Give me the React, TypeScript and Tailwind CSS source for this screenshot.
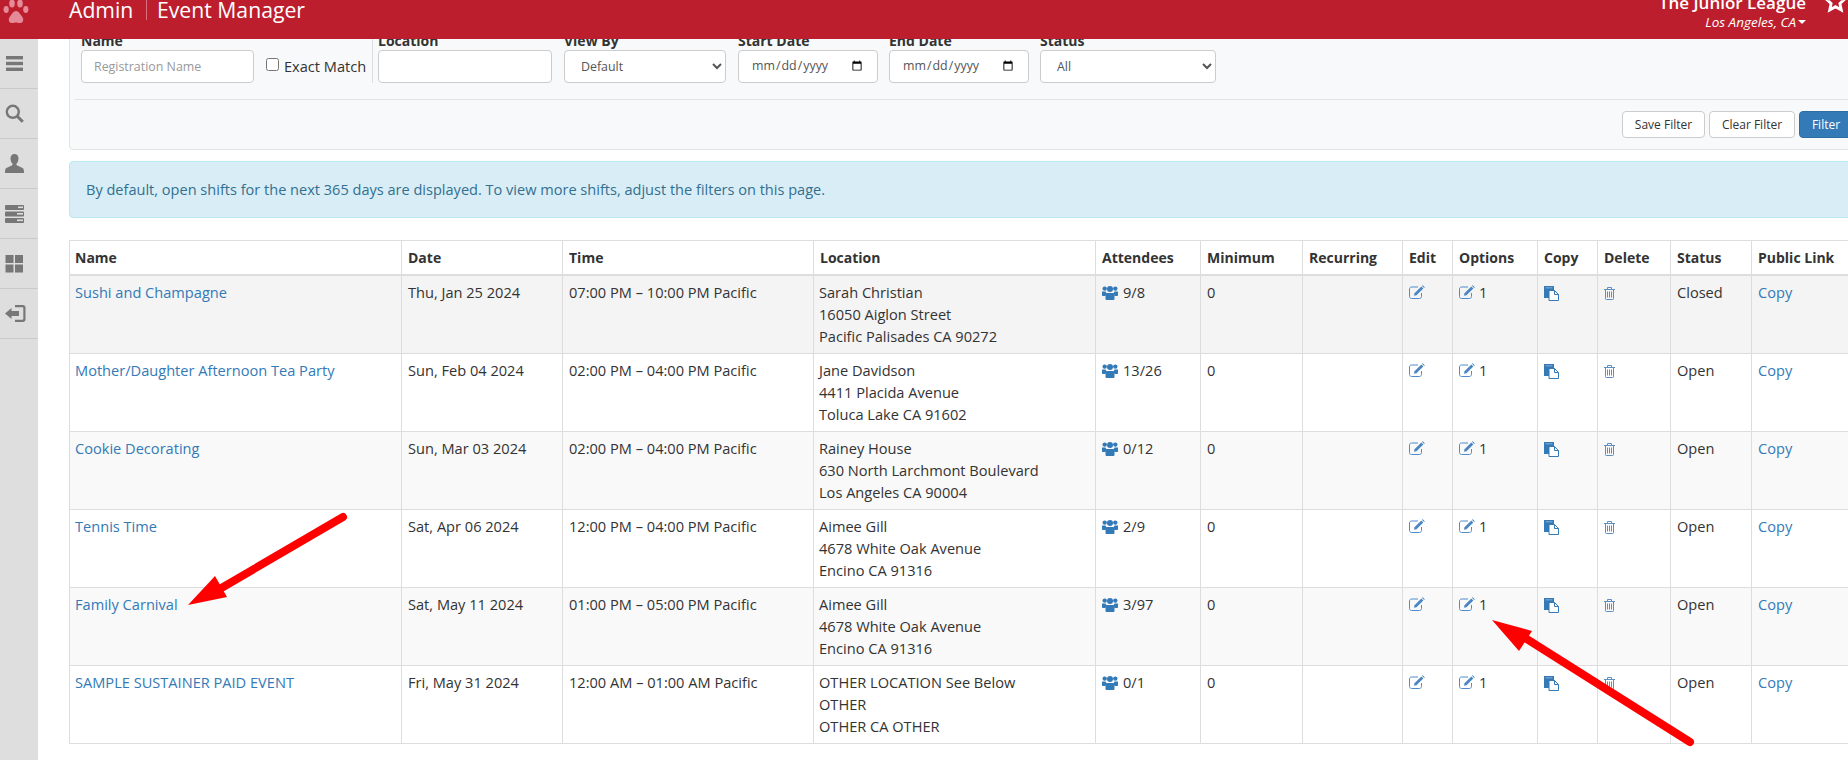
const events = [
    { name: 'Sushi and Champagne', date: 'Thu, Jan 25 2024', time: '07:00 PM – 10:00 PM Pacific', loc: ['Sarah Christian', '16050 Aiglon Street', 'Pacific Palisades CA 90272'], att: '9/8', status: 'Closed', bg: 'bg-[#f4f4f4]' },
    { name: 'Mother/Daughter Afternoon Tea Party', date: 'Sun, Feb 04 2024', time: '02:00 PM – 04:00 PM Pacific', loc: ['Jane Davidson', '4411 Placida Avenue', 'Toluca Lake CA 91602'], att: '13/26', status: 'Open', bg: 'bg-white' },
    { name: 'Cookie Decorating', date: 'Sun, Mar 03 2024', time: '02:00 PM – 04:00 PM Pacific', loc: ['Rainey House', '630 North Larchmont Boulevard', 'Los Angeles CA 90004'], att: '0/12', status: 'Open', bg: 'bg-[#f9f9f9]' },
    { name: 'Tennis Time', date: 'Sat, Apr 06 2024', time: '12:00 PM – 04:00 PM Pacific', loc: ['Aimee Gill', '4678 White Oak Avenue', 'Encino CA 91316'], att: '2/9', status: 'Open', bg: 'bg-white' },
    { name: 'Family Carnival', date: 'Sat, May 11 2024', time: '01:00 PM – 05:00 PM Pacific', loc: ['Aimee Gill', '4678 White Oak Avenue', 'Encino CA 91316'], att: '3/97', status: 'Open', bg: 'bg-[#f9f9f9]' },
    { name: 'SAMPLE SUSTAINER PAID EVENT', date: 'Fri, May 31 2024', time: '12:00 AM – 01:00 AM Pacific', loc: ['OTHER LOCATION See Below', 'OTHER', 'OTHER CA OTHER'], att: '0/1', status: 'Open', bg: 'bg-white' },
];

const columns = [
    { label: 'Name', width: 'w-[332px]' },
    { label: 'Date', width: 'w-[161px]' },
    { label: 'Time', width: 'w-[251px]' },
    { label: 'Location', width: 'w-[282px]' },
    { label: 'Attendees', width: 'w-[105px]' },
    { label: 'Minimum', width: 'w-[102px]' },
    { label: 'Recurring', width: 'w-[100px]' },
    { label: 'Edit', width: 'w-[50px]' },
    { label: 'Options', width: 'w-[85px]' },
    { label: 'Copy', width: 'w-[60px]' },
    { label: 'Delete', width: 'w-[73px]' },
    { label: 'Status', width: 'w-[81px]' },
    { label: 'Public Link', width: 'w-[110px]' },
];

function UsersIcon() {
    return (
        <svg width="16" height="15" viewBox="0 0 16 15" fill="#337ab7" className="mr-[5px] inline-block align-[-2px]">
            <circle cx="8" cy="4" r="3" />
            <circle cx="2.700" cy="3.600" r="2.200" />
            <circle cx="13.300" cy="3.600" r="2.200" />
            <path d="M0 6.500h3.500c.3 1 .9 1.800 1.500 2.300-.9.500-1.400 1.300-1.500 2.200H.8C.3 11 0 10.700 0 10.200z" />
            <path d="M16 6.500h-3.500c-.3 1-.9 1.800-1.500 2.300.9.500 1.400 1.300 1.500 2.200h2.700c.5 0 .8-.3.800-.8z" />
            <path d="M5.300 8h5.400c1.300 0 1.800 1 1.800 2.500v3.200c0 .8-.5 1.300-1.300 1.300H4.800c-.8 0-1.300-.5-1.300-1.300v-3.200C3.500 9 4 8 5.300 8z" />
        </svg>
    );
}

function EditIcon({ className }: { className?: string }) {
    return (
        <svg width="16" height="14" viewBox="0 0 16 14" className={`inline-block align-[-1px] ${className ?? ''}`}>
            <path d="M12.500 8v3.500c0 1.100-.9 2-2 2H2.500c-1.100 0-2-.9-2-2V4c0-1.100.9-2 2-2H9" fill="none" stroke="#4f8cc9" />
            <path d="M5.500 8.200L12.300 1.400l2 2L7.500 10.200 5 10.700z" fill="#4a86c4" />
            <path d="M13 .7l.7-.5 2 2-.5.700z" fill="#337ab7" />
        </svg>
    );
}

function CopyIcon() {
    return (
        <svg width="15" height="15" viewBox="0 0 15 15" className="inline-block align-[-3px]">
            <path d="M0 0h10v12H0z" fill="#337ab7" />
            <path d="M1.500 1.200h7v1.200h-7z" fill="#7aa5cc" />
            <path d="M5 4.500h5.500l4 4v6H5z" fill="#fff" stroke="#337ab7" />
            <path d="M10.500 4.500v4h4" fill="none" stroke="#337ab7" />
        </svg>
    );
}

function TrashIcon() {
    return (
        <svg width="11" height="13" viewBox="0 0 11 13" fill="none" stroke="#5b8fc0" className="inline-block align-[-2px]">
            <path d="M0 2.500h11M3.500 2.500V.5h4v2M1.500 2.500v9.200c0 .5.300.8.800.8h6.400c.5 0 .8-.3.800-.8V2.500" />
            <path d="M3.500 4.500v6M5.500 4.500v6M7.500 4.500v6" />
        </svg>
    );
}

const sidebarIcons = [
    <svg key="menu" width="19" height="19" viewBox="0 0 19 19" fill="#777">
        <rect x="1" y="2" width="17" height="3.400" />
        <rect x="1" y="7.800" width="17" height="3.400" />
        <rect x="1" y="13.600" width="17" height="3.400" />
    </svg>,
    <svg key="search" width="19" height="19" viewBox="0 0 19 19" fill="none" stroke="#777">
        <circle cx="7.800" cy="7.800" r="6" strokeWidth="2.400" />
        <path d="M12.200 12.200l5.600 5.600" strokeWidth="3" />
    </svg>,
    <svg key="user" width="19" height="19" viewBox="0 0 19 19" fill="#777">
        <path d="M9.500 0c2.600 0 4 2 4 4.400 0 2.200-.9 4-1.900 5.200-.5.700-.2 1.400.6 1.800l5.400 2.700c1 .5 1.400 1.600 1.400 4.900H0c0-3.300.4-4.400 1.400-4.900l5.400-2.700c.8-.4 1.100-1.100.6-1.800C6.400 8.400 5.500 6.600 5.500 4.400 5.500 2 6.900 0 9.500 0z" />
    </svg>,
    <svg key="tasks" width="19" height="19" viewBox="0 0 19 19" fill="#777">
        <rect x="0" y="1" width="19" height="5" rx="1" />
        <rect x="0" y="7.500" width="19" height="5" rx="1" />
        <rect x="0" y="14" width="19" height="5" rx="1" />
        <rect x="13" y="2.500" width="5" height="1.600" fill="#dedede" />
        <rect x="12" y="9" width="6" height="1.600" fill="#dedede" />
        <rect x="12" y="15.500" width="6" height="1.600" fill="#dedede" />
    </svg>,
    <svg key="grid" width="19" height="19" viewBox="0 0 19 19" fill="#777">
        <rect x="0.500" y="1" width="8" height="8" />
        <rect x="10" y="1" width="8" height="8" />
        <rect x="0.500" y="10.500" width="8" height="8" />
        <rect x="10" y="10.500" width="8" height="8" />
    </svg>,
    <svg key="logout" width="21" height="19" viewBox="0 0 21 19" fill="#777">
        <path d="M0 9.500L6.500 4v3h7.500v5H6.500v3z" />
        <path d="M10 1h8c1.400 0 2.500 1.100 2.500 2.500v12c0 1.400-1.100 2.500-2.500 2.500h-8v-2.200h7.500c.5 0 .8-.3.800-.8V4c0-.5-.3-.8-.8-.8H10z" />
    </svg>,
];

export default function App() {
    return (
        <div className="relative h-[760px] w-[1848px] overflow-hidden bg-white font-['Open_Sans',sans-serif] text-[14px] text-[#333]">
            {/* Top bar */}
            <header className="relative z-10 flex h-[39px] justify-between overflow-hidden bg-[#bd1e2e] text-white">
                <div className="flex items-start">
                    <svg width="26" height="24" viewBox="0 0 26 24" fill="#e58a98" className="ml-[3px] shrink-0">
                        <path d="M13 11c2.500 0 4 3 6 5.500 2 2.500 1.500 6-1.500 6.500-1.700.3-3-.6-4.500-.6s-2.800.9-4.500.6C5.500 22.500 5 19 7 16.500c2-2.500 3.500-5.500 6-5.500z" />
                        <ellipse cx="3.200" cy="9.500" rx="2.600" ry="3.400" />
                        <ellipse cx="9" cy="3.500" rx="2.800" ry="4" />
                        <ellipse cx="17" cy="3.500" rx="2.800" ry="4" />
                        <ellipse cx="22.800" cy="9.500" rx="2.600" ry="3.400" />
                    </svg>
                    <div className="-mt-[4px] ml-[40px] flex items-center text-[21.200px] leading-[28px]">
                        <span className="w-[65px] font-medium whitespace-nowrap">Admin</span>
                        <span className="mr-[10px] ml-[12px] h-[20px] w-px bg-[#d9707c]" />
                        <span>Event Manager</span>
                    </div>
                </div>
                <div className="flex items-start pr-px">
                    <div className="-mt-[8px] text-right">
                        <div className="text-[17px] leading-[22px] font-semibold">The Junior League</div>
                        <div className="flex items-center justify-end text-[13.500px] leading-[16px] italic">
                            Los Angeles, CA
                            <span className="ml-[2px] h-0 w-0 border-x-[4px] border-t-[4px] border-x-transparent border-t-white" />
                        </div>
                    </div>
                    <svg width="23" height="23" viewBox="0 0 24 24" className="-mt-[10px] ml-[18px]" fill="none" stroke="#fff" strokeWidth="3">
                        <path d="M12 2.500l2.900 6.200 6.700.8-5 4.600 1.400 6.700-6-3.400-6 3.400 1.400-6.700-5-4.600 6.700-.8z" />
                    </svg>
                </div>
            </header>

            <div className="flex h-[721px]">
                {/* Side menu */}
                <nav className="w-[38px] shrink-0 bg-[#dedede]">
                    {sidebarIcons.map((icon, i) => (
                        <div key={i} className="flex h-[50px] items-center border-b border-[#c9c9c9] pl-[5px]">
                            {icon}
                        </div>
                    ))}
                </nav>

                <main className="min-w-0 flex-1 overflow-hidden pl-[31px]">
                    <div className="w-[1791px]">
                        {/* Filter panel */}
                        <div className="-mt-[20px] rounded border border-[#e3e3e3] bg-[#f8f9fa] px-[5px] pt-[10px] pb-[11px]">
                            <div className="flex items-end pl-[6px]">
                                <div className="w-[173px]">
                                    <div className="h-[20px] leading-[21px] font-bold">Name</div>
                                    <input placeholder="Registration Name" className="h-[33px] w-full rounded border border-[#ccc] bg-white px-[12px] text-[12.400px] text-[#555] placeholder:text-[#999]" />
                                </div>
                                <label className="ml-[12px] flex h-[53px] w-[107px] items-center gap-[5px] border-r border-[#ddd] pt-[20px]">
                                    <input type="checkbox" className="m-0 -mt-[4px] h-[13px] w-[13px]" />
                                    <span className="text-[14.600px] whitespace-nowrap">Exact Match</span>
                                </label>
                                <div className="ml-[5px] w-[174px]">
                                    <div className="h-[20px] leading-[21px] font-bold">Location</div>
                                    <input className="h-[33px] w-full rounded border border-[#ccc] bg-white px-[12px] text-[12px]" />
                                </div>
                                <div className="ml-[12px] w-[162px]">
                                    <div className="h-[20px] leading-[21px] font-bold">View By</div>
                                    <select className="h-[33px] w-full rounded border border-[#ccc] bg-white pl-[12px] text-[12.400px] text-[#555]">
                                        <option>Default</option>
                                    </select>
                                </div>
                                <div className="ml-[12px] w-[140px]">
                                    <div className="h-[20px] leading-[21px] font-bold">Start Date</div>
                                    <input type="date" className="h-[33px] w-full rounded border border-[#ccc] bg-white px-[12px] text-[12.400px] text-[#555]" />
                                </div>
                                <div className="ml-[11px] w-[140px]">
                                    <div className="h-[20px] leading-[21px] font-bold">End Date</div>
                                    <input type="date" className="h-[33px] w-full rounded border border-[#ccc] bg-white px-[12px] text-[12.400px] text-[#555]" />
                                </div>
                                <div className="ml-[11px] w-[176px]">
                                    <div className="h-[20px] leading-[21px] font-bold">Status</div>
                                    <select className="h-[33px] w-full rounded border border-[#ccc] bg-white pl-[12px] text-[12.400px] text-[#555]">
                                        <option>All</option>
                                    </select>
                                </div>
                            </div>
                            <hr className="mt-[16px] border-[#e3e3e3]" />
                            <div className="mt-[11px] flex justify-end gap-[4px] pr-px text-[12px]">
                                <button className="h-[27px] w-[83px] rounded border border-[#ccc] bg-white">Save Filter</button>
                                <button className="h-[27px] w-[86px] rounded border border-[#ccc] bg-white">Clear Filter</button>
                                <button className="h-[27px] w-[54px] rounded border border-[#2e6da4] bg-[#337ab7] text-white">Filter</button>
                            </div>
                        </div>

                        {/* Info alert */}
                        <div className="mt-[11px] flex h-[57px] items-center rounded border border-[#bce8f1] bg-[#d9edf7] pl-[16px] text-[14.550px] text-[#31708f]">
                            By default, open shifts for the next 365 days are displayed. To view more shifts, adjust the filters on this page.
                        </div>

                        {/* Events table */}
                        <table className="mt-[22px] w-[1792px] table-fixed border-collapse">
                            <colgroup>
                                {columns.map((c) => (
                                    <col key={c.label} className={c.width} />
                                ))}
                            </colgroup>
                            <thead>
                                <tr className="h-[34px]">
                                    {columns.map((c) => (
                                        <th key={c.label} className="border border-b-2 border-[#ddd] px-[6px] text-left font-bold whitespace-nowrap first:pl-[5px]">
                                            {c.label}
                                        </th>
                                    ))}
                                </tr>
                            </thead>
                            <tbody>
                                {events.map((e) => (
                                    <tr key={e.name} className={`h-[78px] align-top text-[14.600px] leading-[22px] ${e.bg}`}>
                                        <td className="border border-[#ddd] pt-[5px] pr-[6px] pb-[6px] pl-[5px] text-[#337ab7]">{e.name}</td>
                                        <td className="border border-[#ddd] px-[6px] pt-[5px] pb-[6px]">{e.date}</td>
                                        <td className="border border-[#ddd] px-[6px] pt-[5px] pb-[6px]">{e.time}</td>
                                        <td className="border border-[#ddd] px-[5px] pt-[5px] pb-[6px]">
                                            {e.loc.map((line) => (
                                                <div key={line}>{line}</div>
                                            ))}
                                        </td>
                                        <td className="border border-[#ddd] px-[6px] pt-[5px] pb-[6px]">
                                            <UsersIcon />
                                            {e.att}
                                        </td>
                                        <td className="border border-[#ddd] px-[6px] pt-[5px] pb-[6px]">0</td>
                                        <td className="border border-[#ddd] px-[6px] pt-[5px] pb-[6px]" />
                                        <td className="border border-[#ddd] px-[6px] pt-[5px] pb-[6px]">
                                            <EditIcon />
                                        </td>
                                        <td className="border border-[#ddd] px-[6px] pt-[5px] pb-[6px]">
                                            <EditIcon className="mr-[4px]" />1
                                        </td>
                                        <td className="border border-[#ddd] px-[6px] pt-[5px] pb-[6px]">
                                            <CopyIcon />
                                        </td>
                                        <td className="border border-[#ddd] px-[6px] pt-[5px] pb-[6px]">
                                            <TrashIcon />
                                        </td>
                                        <td className="border border-[#ddd] px-[6px] pt-[5px] pb-[6px]">{e.status}</td>
                                        <td className="border border-[#ddd] px-[6px] pt-[5px] pb-[6px] text-[#337ab7]">Copy</td>
                                    </tr>
                                ))}
                            </tbody>
                        </table>
                    </div>
                </main>
            </div>

            {/* Red annotation arrows drawn over the screenshot */}
            <svg width="1848" height="760" className="pointer-events-none absolute inset-0 z-20" fill="#ff0000" stroke="none">
                <path d="M343 517L218 590" stroke="#ff0000" strokeWidth="8" strokeLinecap="round" />
                <polygon points="188,605 215,576 227,597" />
                <path d="M1690 742L1525 638" stroke="#ff0000" strokeWidth="8" strokeLinecap="round" />
                <polygon points="1492,620 1532,631 1519,651" />
            </svg>
        </div>
    );
}
